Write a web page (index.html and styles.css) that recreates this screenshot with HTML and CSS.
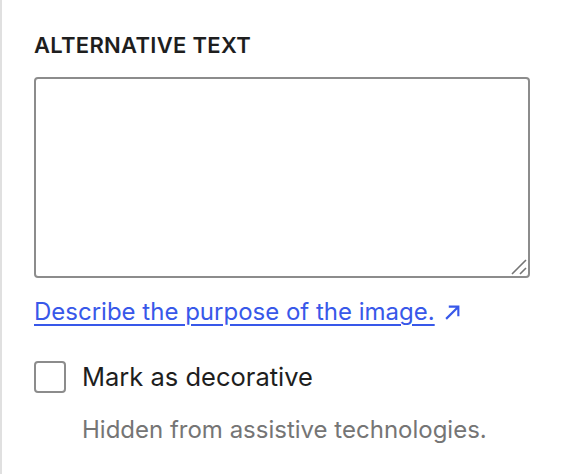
FILE: index.html
```html
<!DOCTYPE html>
<html lang="en">
<head>
  <meta charset="UTF-8">
  <meta name="viewport" content="width=device-width, initial-scale=1.0">
  <title>Alternative text</title>
  <link rel="stylesheet" href="styles.css">
</head>
<body>
  <div class="panel">
    <label class="field-label" for="alt">Alternative text</label>
    <div class="input-wrap">
      <textarea id="alt" class="alt-input"></textarea>
      <svg class="grip" viewBox="0 0 16 16" width="16" height="16"><path d="M1 15L15 1M9 15L15 9" fill="none" stroke="#757575" stroke-width="1.6"/></svg>
    </div>
    <a class="help-link" href="#">Describe the purpose of the image.<svg class="ext" viewBox="0 0 16 16" width="16" height="16"><path d="M2 14L13.5 2.5M4.5 2.5h9v9" fill="none" stroke="currentColor" stroke-width="2"/></svg></a>

    <div class="check-row">
      <input type="checkbox" id="decorative" class="check">
      <label for="decorative" class="check-label">Mark as decorative</label>
    </div>
    <p class="hint">Hidden from assistive technologies.</p>
  </div>
</body>
</html>
```

FILE: styles.css
```css
body {
  margin: 0;
  background: #ffffff;
  font-family: Inter, "Noto Sans", sans-serif;
  color: #1e1e1e;
}
.panel {
  border-left: 2px solid #e0e0e0;
  min-height: 100vh;
  box-sizing: border-box;
  padding: 32px 32px 0 32px;
}
.field-label {
  display: block;
  font-size: 22px;
  font-weight: 600;
  text-transform: uppercase;
  line-height: 26px;
  letter-spacing: 0.3px;
  margin-bottom: 19px;
}
.input-wrap {
  position: relative;
  width: 496px;
}
.alt-input {
  display: block;
  box-sizing: border-box;
  width: 496px;
  height: 201px;
  border: 2px solid #8c8c8c;
  border-radius: 4px;
  resize: none;
  margin: 0;
  font: inherit;
}
.grip {
  position: absolute;
  right: 3px;
  bottom: 3px;
  pointer-events: none;
}
.help-link {
  display: inline-flex;
  align-items: center;
  gap: 9px;
  margin-top: 18px;
  font-size: 24px;
  line-height: 32px;
  color: #3858e9;
  text-decoration: underline;
  text-underline-offset: 4px;
}
.ext {
  width: 17px;
  height: 17px;
}
.check-row {
  display: flex;
  align-items: center;
  gap: 16px;
  margin-top: 33px;
}
.check {
  appearance: none;
  width: 32px;
  height: 32px;
  margin: 0;
  border: 2px solid #8c8c8c;
  border-radius: 4px;
  background: #fff;
}
.check-label {
  font-size: 25.5px;
  line-height: 32px;
}
.hint {
  margin: 21px 0 0 48px;
  font-size: 24px;
  line-height: 32px;
  color: #757575;
}
```
